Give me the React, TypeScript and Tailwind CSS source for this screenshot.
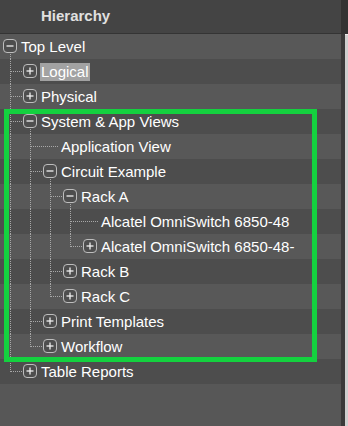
import React from "react";

interface TreeNode {
  label: string;
  expanded?: boolean;
  selected?: boolean;
  hasToggle: boolean;
  children?: TreeNode[];
}

const tree: TreeNode = {
  label: "Top Level",
  hasToggle: true,
  expanded: true,
  children: [
    { label: "Logical", hasToggle: true, selected: true },
    { label: "Physical", hasToggle: true },
    {
      label: "System & App Views",
      hasToggle: true,
      expanded: true,
      children: [
        { label: "Application View", hasToggle: false },
        {
          label: "Circuit Example",
          hasToggle: true,
          expanded: true,
          children: [
            {
              label: "Rack A",
              hasToggle: true,
              expanded: true,
              children: [
                { label: "Alcatel OmniSwitch 6850-48", hasToggle: false },
                { label: "Alcatel OmniSwitch 6850-48-", hasToggle: true },
              ],
            },
            { label: "Rack B", hasToggle: true },
            { label: "Rack C", hasToggle: true },
          ],
        },
        { label: "Print Templates", hasToggle: true },
        { label: "Workflow", hasToggle: true },
      ],
    },
    { label: "Table Reports", hasToggle: true },
  ],
};

interface FlatRow {
  node: TreeNode;
  depth: number;
  isLast: boolean;
  // per column: does the line from an ancestor keep going down
  continues: boolean[];
}

function flatten(node: TreeNode, depth: number, isLast: boolean, continues: boolean[], out: FlatRow[]) {
  out.push({ node, depth, isLast, continues });
  if (node.expanded && node.children) {
    node.children.forEach((child, i) => {
      const last = i === node.children!.length - 1;
      flatten(child, depth + 1, last, [...continues, depth === 0 || !isLast], out);
    });
  }
  return out;
}

const LINE = "#a8a8a8";
const ROW_H = 25;
const MID = 12.5;

function Guides({ row }: { row: FlatRow }) {
  const { depth, node, isLast, continues } = row;
  const width = 20 * (depth + 1);
  const lines: React.ReactNode[] = [];

  for (let j = 0; j < depth - 1; j++) {
    if (continues[j + 1]) {
      const x = 10.5 + 20 * j;
      lines.push(<line key={`v${j}`} x1={x} y1={0} x2={x} y2={ROW_H} />);
    }
  }

  if (depth > 0) {
    const x = 10.5 + 20 * (depth - 1);
    lines.push(<line key="conn" x1={x} y1={0} x2={x} y2={isLast ? MID : ROW_H} />);
    const endX = node.hasToggle ? 20 * depth + 3 : 20 * depth + 19;
    lines.push(<line key="h" x1={x} y1={MID} x2={endX} y2={MID} />);
  }

  if (node.expanded) {
    const x = 10.5 + 20 * depth;
    lines.push(<line key="down" x1={x} y1={20} x2={x} y2={ROW_H} />);
  }

  const ix = 3.5 + 20 * depth;
  return (
    <svg width={width} height={ROW_H} className="shrink-0" shapeRendering="crispEdges">
      <g stroke={LINE} strokeWidth={1} strokeDasharray="1 1">
        {lines}
      </g>
      {node.hasToggle && (
        <g shapeRendering="geometricPrecision">
          <rect x={ix} y={5.5} width={13} height={13} rx={3.5} fill="#4e4e4e" stroke="#bdbdbd" strokeWidth={1} />
          <line x1={ix + 3} y1={12} x2={ix + 10} y2={12} stroke="#f2f2f2" strokeWidth={1.3} />
          {!node.expanded && (
            <line x1={ix + 6.5} y1={8.5} x2={ix + 6.5} y2={15.5} stroke="#f2f2f2" strokeWidth={1.3} />
          )}
        </g>
      )}
    </svg>
  );
}

export default function App() {
  const rows = flatten(tree, 0, true, [], []);

  return (
    <div
      className="relative flex h-[426px] w-[348px] overflow-hidden bg-[#575757]"
      style={{ fontFamily: '"Liberation Sans", Arial, sans-serif' }}
    >
      <div className="flex w-[341px] flex-col">
        <div className="flex h-[34px] shrink-0 items-center border-b border-[#343434] bg-[#444444] pl-[41px]">
          <span className="text-[15px] font-bold text-[#e0e0e0]">Hierarchy</span>
        </div>
        <div className="flex flex-col">
          {rows.map((row, i) => (
            <div
              key={row.node.label + i}
              className={`flex h-[25px] items-center ${i % 2 === 0 ? "bg-[#585858]" : "bg-[#4d4d4d]"}`}
            >
              <Guides row={row} />
              <span
                className={`whitespace-nowrap px-px text-[15px] leading-[18px] text-white ${
                  row.node.selected ? "bg-[#a2a2a2]" : ""
                }`}
              >
                {row.node.label}
              </span>
            </div>
          ))}
        </div>
      </div>

      <div className="flex w-[7px] flex-col">
        <div className="h-[34px] shrink-0 bg-[#333333]" />
        <div className="flex flex-1">
          <div className="w-[4px] bg-[#3a3a3a]" />
          <div className="w-[3px] border-t border-[#eeeeee] bg-[#cfcfcf]" />
        </div>
      </div>

      {/* annotation box */}
      <div className="pointer-events-none absolute left-[4px] top-[109px] h-[253px] w-[313px] border-[5px] border-[#14d13f]" />
    </div>
  );
}
